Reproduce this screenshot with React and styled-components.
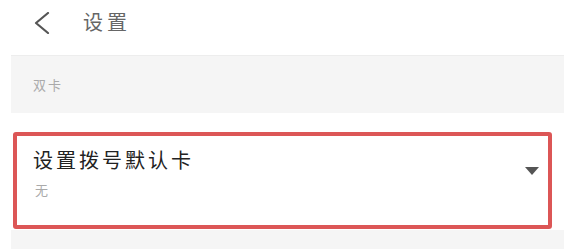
import React from 'react'
import styled, { createGlobalStyle } from 'styled-components'

const GlobalStyle = createGlobalStyle`
	body {
		margin: 0;
		background: #ffffff;
		font-family: "Noto Sans CJK SC", "Noto Sans", sans-serif;
	}
`

const Page = styled.div`
	width: 564px;
	height: 249px;
	overflow: hidden;
	background: #ffffff;
`

const Header = styled.div`
	display: flex;
	align-items: center;
	height: 55px;
	padding-left: 33px;
	box-sizing: border-box;
`

const BackIcon = styled.svg`
	width: 17px;
	height: 22px;
	margin-right: 33px;
	margin-top: -10px;
`

const Title = styled.div`
	font-size: 20px;
	line-height: 24px;
	letter-spacing: 4px;
	color: #666666;
	margin-top: -12px;
`

const Content = styled.div`
	margin-left: 11px;
`

const SectionHeader = styled.div`
	display: flex;
	align-items: center;
	height: 58px;
	padding-left: 22px;
	background: #f5f5f5;
	border-top: 1px solid #ededed;
	box-sizing: border-box;
	font-size: 13px;
	letter-spacing: 2px;
	color: #aaaaaa;
`

const Row = styled.div`
	display: flex;
	justify-content: space-between;
	align-items: flex-start;
	height: 97px;
	margin: 19px 12px 0 2px;
	padding: 12px 9px 0 16px;
	box-sizing: border-box;
	border: 4px solid #dc5656;
	border-radius: 3px;
	background: #ffffff;
`

const RowText = styled.div`
	display: flex;
	flex-direction: column;
	gap: 10px;
`

const RowTitle = styled.div`
	font-size: 20px;
	line-height: 24px;
	letter-spacing: 3px;
	color: #222222;
`

const RowValue = styled.div`
	font-size: 13px;
	line-height: 16px;
	color: #aaaaaa;
	padding-left: 2px;
`

const Arrow = styled.svg`
	width: 14px;
	height: 8px;
	margin-top: 19px;
`

const Footer = styled.div`
	height: 40px;
	margin-top: 1px;
	background: #f5f5f5;
`

const App = () => (
	<Page>
		<GlobalStyle />
		<Header>
			<BackIcon viewBox="0 0 17 22">
				<path d="M15 1 L3 11 L15 21" fill="none" stroke="#555555" strokeWidth="2.2" strokeLinecap="round" strokeLinejoin="round" />
			</BackIcon>
			<Title>{'设置'}</Title>
		</Header>
		<Content>
			<SectionHeader>{'双卡'}</SectionHeader>
			<Row>
				<RowText>
					<RowTitle>{'设置拨号默认卡'}</RowTitle>
					<RowValue>{'无'}</RowValue>
				</RowText>
				<Arrow viewBox="0 0 14 8">
					<path d="M0 0 L14 0 L7 8 Z" fill="#555555" />
				</Arrow>
			</Row>
			<Footer />
		</Content>
	</Page>
)

export default App
